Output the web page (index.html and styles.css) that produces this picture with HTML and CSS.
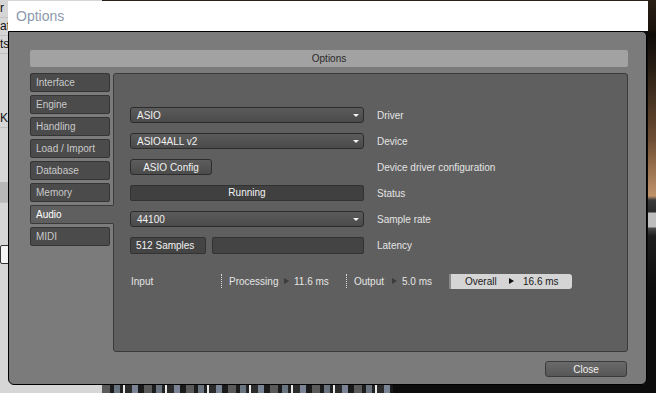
FILE: index.html
```html
<!DOCTYPE html>
<html lang="en">
<head>
    <meta charset="UTF-8">
    <meta name="viewport" content="width=device-width, initial-scale=1.0">
    <title>Options</title>
    <link rel="stylesheet" href="styles.css">
</head>
<body>
    <div class="desk">
        <div class="app-left">
            <div class="app-row">r</div>
            <div class="app-row">at</div>
            <div class="app-row">ts</div>
            <div class="app-row gap">Kx</div>
            <div class="app-row dark"></div>
            <div class="app-row field">2</div>
        </div>
        <div class="app-main">
            <div class="app-top"></div>
            <div class="app-center"></div>
            <div class="keys-row">
                <div class="keys"></div>
            </div>
        </div>
        <div class="app-right"></div>
    </div>

    <div class="window">
        <div class="titlebar">Options</div>
        <div class="dialog">
            <div class="dialog-head">Options</div>
            <div class="dialog-main">
                <div class="tabs">
                    <div class="tab">Interface</div>
                    <div class="tab">Engine</div>
                    <div class="tab">Handling</div>
                    <div class="tab">Load / Import</div>
                    <div class="tab">Database</div>
                    <div class="tab">Memory</div>
                    <div class="tab active">Audio</div>
                    <div class="tab">MIDI</div>
                </div>
                <div class="panel">
                    <div class="rows">
                        <div class="row">
                            <div class="ctl select"><span>ASIO</span><span class="caret"></span></div>
                            <div class="label">Driver</div>
                        </div>
                        <div class="row">
                            <div class="ctl select"><span>ASIO4ALL v2</span><span class="caret"></span></div>
                            <div class="label">Device</div>
                        </div>
                        <div class="row">
                            <div class="ctl"><button class="btn config">ASIO Config</button></div>
                            <div class="label">Device driver configuration</div>
                        </div>
                        <div class="row">
                            <div class="ctl status">Running</div>
                            <div class="label">Status</div>
                        </div>
                        <div class="row">
                            <div class="ctl select"><span>44100</span><span class="caret"></span></div>
                            <div class="label">Sample rate</div>
                        </div>
                        <div class="row tall">
                            <div class="ctl split">
                                <div class="field samples">512 Samples</div>
                                <div class="field blank"></div>
                            </div>
                            <div class="label">Latency</div>
                        </div>
                    </div>
                    <div class="meters">
                        <div class="meter m-input">Input</div>
                        <div class="sep"></div>
                        <div class="meter m-proc">
                            <span class="m-name proc">Processing</span>
                            <span class="arrow"></span>
                            <span>11.6 ms</span>
                        </div>
                        <div class="sep"></div>
                        <div class="meter m-out">
                            <span class="m-name out">Output</span>
                            <span class="arrow"></span>
                            <span>5.0 ms</span>
                        </div>
                        <div class="overall">
                            <span class="m-name all">Overall</span>
                            <span class="arrow dark"></span>
                            <span>16.6 ms</span>
                        </div>
                    </div>
                </div>
            </div>
            <div class="dialog-foot">
                <button class="btn close">Close</button>
            </div>
        </div>
    </div>
</body>
</html>
```

FILE: styles.css
```css
body {
    margin: 0;
    width: 656px;
    height: 393px;
    overflow: hidden;
    position: relative;
    font-family: "Liberation Sans", Arial, sans-serif;
    font-size: 10px;
    background: #0c0c0c;
}

/* the program behind the dialog */
.desk {
    display: flex;
    height: 393px;
}
.app-left {
    width: 102px;
    flex: none;
    background: #d6d6d6;
    color: #111;
    font-size: 12px;
    display: flex;
    flex-direction: column;
}
.app-row {
    height: 17px;
    line-height: 17px;
    border-bottom: 1px solid #c2c2c2;
}
.app-row.gap {
    margin-top: 56px;
}
.app-row.dark {
    margin-top: 54px;
    height: 20px;
    background: #b8b8b8;
}
.app-row.field {
    margin-top: 42px;
    background: #f4f4f4;
}
.app-main {
    flex: 1;
    display: flex;
    flex-direction: column;
    background: #0c0c0c;
}
.app-top {
    height: 1px;
    background: #2b2117;
}
.app-center {
    flex: 1;
}
.keys-row {
    height: 8px;
    display: flex;
}
.keys {
    width: 291px;
    background: repeating-linear-gradient(90deg, #5a5a5a 0 8px, #1c1c1c 8px 12px, #6a7380 12px 18px, #222 18px 21px, #e8e8e8 21px 23px, #2c2c2c 23px 30px, #7a8494 30px 36px, #1a1a1a 36px 42px);
}
.app-right {
    width: 8px;
    flex: none;
    background: linear-gradient(to bottom, #2a1f14 0, #1a130c 30px, #0e0b08 34px, #2a1f15 70px, #6e4e33 140px, #c0926a 196px, #3a3a3a 200px, #2a2a2a 212px, #bdbdbd 213px, #bdbdbd 227px, #4a4a4a 228px, #1e1e1e 236px, #0c0c0c 290px);
}

/* options window */
.window {
    position: absolute;
    left: 8px;
    top: 1px;
    width: 640px;
    height: 384px;
    overflow: hidden;
    display: flex;
    flex-direction: column;
}
.titlebar {
    height: 30px;
    background: #fff;
    color: #8b99ad;
    font-size: 14px;
    line-height: 30px;
    padding-left: 8px;
}
.dialog {
    flex: 1;
    margin-right: 1px;
    background: #7b7b7b;
    border: 1px solid #000;
    border-radius: 0 5px 6px 6px;
    padding: 18px 18px 7px 21px;
    display: flex;
    flex-direction: column;
}
.dialog-head {
    height: 17px;
    line-height: 17px;
    background: #a2a2a2;
    color: #2a2a2a;
    text-align: center;
    border-radius: 2px;
    margin-bottom: 6px;
}
.dialog-main {
    height: 279px;
    display: flex;
    gap: 3px;
}

.tabs {
    width: 80px;
    display: flex;
    flex-direction: column;
    gap: 3px;
}
.tab {
    height: 17px;
    line-height: 17px;
    padding-left: 5px;
    background: #4b4b4b;
    border: 1px solid #353535;
    border-radius: 2px;
    color: #c9c9c9;
}
.tab.active {
    position: relative;
    z-index: 1;
    margin-right: -4px;
    background: #5f5f5f;
    border-color: #3a3a3a;
    border-right-color: #5f5f5f;
    border-radius: 2px 0 0 2px;
    color: #fff;
}

.panel {
    flex: 1;
    background: #5f5f5f;
    border: 1px solid #3a3a3a;
    border-radius: 3px;
    padding: 33px 0 0 16px;
    color: #e4e4e4;
}
.rows {
    display: flex;
    flex-direction: column;
    gap: 10px;
}
.row {
    display: flex;
    align-items: center;
    height: 16px;
}
.row.tall {
    height: 17px;
}
.ctl {
    width: 234px;
    height: 100%;
    box-sizing: border-box;
}
.label {
    margin-left: 13px;
    color: #e4e4e4;
}

.select {
    display: flex;
    align-items: center;
    justify-content: space-between;
    padding: 0 4px 0 6px;
    background: linear-gradient(#5b5b5b, #4a4a4a);
    border: 1px solid #2c2c2c;
    border-radius: 3px;
    color: #f2f2f2;
}
.caret {
    width: 0;
    height: 0;
    border-left: 3px solid transparent;
    border-right: 3px solid transparent;
    border-top: 3px solid #f2f2f2;
}

.btn {
    font-family: "Liberation Sans", Arial, sans-serif;
    font-size: 10px;
    color: #f2f2f2;
    background: linear-gradient(#5d5d5d, #4b4b4b);
    border: 1px solid #2c2c2c;
    border-radius: 3px;
    padding: 0;
    cursor: pointer;
}
.btn.config {
    width: 82px;
    height: 16px;
}

.status {
    background: #404040;
    border: 1px solid #323232;
    border-radius: 2px;
    text-align: center;
    line-height: 14px;
    color: #f4f4f4;
}

.split {
    display: flex;
    gap: 6px;
}
.field {
    background: #444;
    border: 1px solid #333;
    border-radius: 2px;
    line-height: 15px;
    padding-left: 5px;
    color: #f2f2f2;
}
.field.samples {
    width: 69px;
}
.field.blank {
    flex: 1;
}

.meters {
    display: flex;
    align-items: center;
    margin-top: 19px;
    height: 16px;
    padding-left: 1px;
}
.meter {
    display: flex;
    align-items: center;
}
.m-input {
    width: 90px;
}
.sep {
    width: 0;
    height: 14px;
    border-left: 1px dotted #d8d8d8;
}
.m-proc {
    width: 117px;
    padding-left: 7px;
}
.m-out {
    width: 95px;
    padding-left: 7px;
}
.m-name.proc {
    width: 55px;
}
.m-name.out {
    width: 38px;
}
.m-name.all {
    width: 44px;
}
.arrow {
    width: 0;
    height: 0;
    border-top: 3px solid transparent;
    border-bottom: 3px solid transparent;
    border-left: 5px solid #3c3c3c;
    margin-right: 5px;
}
.arrow.dark {
    border-left-color: #111;
    margin-right: 9px;
}
.overall {
    display: flex;
    align-items: center;
    width: 107px;
    height: 15px;
    padding-left: 14px;
    background: #d5d5d5;
    border-left: 2px solid #8a8a8a;
    border-radius: 0 3px 3px 0;
    color: #1a1a1a;
}

.dialog-foot {
    display: flex;
    justify-content: flex-end;
    margin-top: 9px;
    padding-right: 1px;
}
.btn.close {
    width: 82px;
    height: 16px;
    background: linear-gradient(#6a6a6a, #575757);
    border-color: #3a3a3a;
}
```
